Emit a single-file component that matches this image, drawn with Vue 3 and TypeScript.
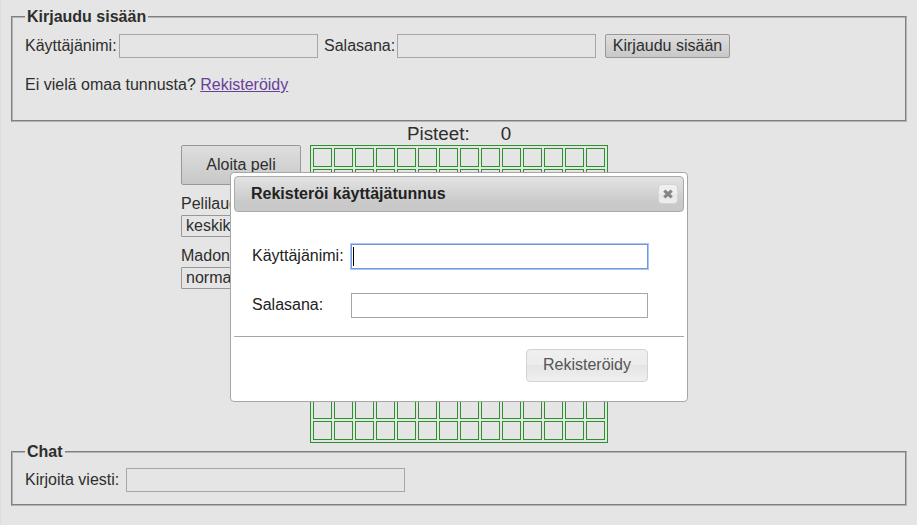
<script setup lang="ts">
import { ref } from 'vue'

const columns = 14
const cells = columns * columns
const score = ref(0)
const username = ref('')
const password = ref('')
const message = ref('')
const newUsername = ref('')
const newPassword = ref('')
</script>

<template>
  <div class="page">
    <fieldset class="panel login">
      <legend>Kirjaudu sisään</legend>
      <div class="login-row">
        <label class="user-label">Käyttäjänimi:</label>
        <input v-model="username" class="field" type="text" />
        <label class="pass-label">Salasana:</label>
        <input v-model="password" class="field" type="password" />
        <button class="login-button" type="button">Kirjaudu sisään</button>
      </div>
      <p class="register-line">Ei vielä omaa tunnusta? <a href="#">Rekisteröidy</a></p>
    </fieldset>

    <main class="game">
      <div class="score"><span>Pisteet:</span><span>{{ score }}</span></div>
      <div class="game-row">
        <aside class="settings">
          <button class="start" type="button">Aloita peli</button>
          <div class="setting">
            <label>Pelilaudan koko:</label>
            <div class="select">keskikokoinen</div>
          </div>
          <div class="setting">
            <label>Madon nopeus:</label>
            <div class="select">normaali</div>
          </div>
        </aside>
        <div class="board">
          <i v-for="n in cells" :key="n" class="cell"></i>
        </div>
      </div>
    </main>

    <fieldset class="panel chat">
      <legend>Chat</legend>
      <div class="chat-row">
        <label class="chat-label">Kirjoita viesti:</label>
        <input v-model="message" class="field chat-field" type="text" />
      </div>
    </fieldset>

    <section class="dialog" role="dialog">
      <header class="titlebar">
        <span class="title">Rekisteröi käyttäjätunnus</span>
        <button class="close" type="button">
          <svg width="10" height="10" viewBox="0 0 10 10">
            <path d="M1.3 1.6 8.7 8.4M8.7 1.6 1.3 8.4" stroke="#858585" stroke-width="3.2" fill="none" />
          </svg>
        </button>
      </header>
      <div class="dialog-body">
        <div class="form-row">
          <label>Käyttäjänimi:</label>
          <div class="input-wrap">
            <input v-model="newUsername" class="dialog-input active" type="text" />
            <span class="caret"></span>
          </div>
        </div>
        <div class="form-row">
          <label>Salasana:</label>
          <div class="input-wrap">
            <input v-model="newPassword" class="dialog-input" type="password" />
          </div>
        </div>
      </div>
      <footer class="dialog-footer">
        <button class="register" type="button">Rekisteröidy</button>
      </footer>
    </section>
  </div>
</template>

<style>
body {
  background: #e5e5e5;
  overflow: hidden;
}
</style>

<style scoped>
* {
  box-sizing: border-box;
}
.page {
  position: relative;
  width: 917px;
  height: 525px;
  padding: 8px 10px 0 10px;
  border-left: 1px solid #dcdcdc;
  background: #e5e5e5;
  color: #2e2e2e;
  font: 16px/18px "Liberation Sans", Arial, sans-serif;
}
button,
input {
  font: inherit;
  color: inherit;
  margin: 0;
  border-radius: 0;
  outline: none;
}
.panel {
  display: block;
  width: 896px;
  margin: 0;
  padding: 0 13px;
  border: 1px solid;
  border-color: #808080 #b4b4b4 #b4b4b4 #808080;
  box-shadow: inset -1px -1px #808080, inset 1px 1px #b4b4b4;
}
.login {
  height: 114px;
}
.chat {
  height: 63px;
}
legend {
  height: 17px;
  padding: 0 2px;
  background: #e5e5e5;
  font-weight: bold;
}
.login-row,
.chat-row {
  display: flex;
  align-items: center;
  height: 24px;
}
.login-row {
  margin-top: 9px;
}
.chat-row {
  margin-top: 8px;
}
.user-label {
  width: 94px;
}
.pass-label {
  width: 73px;
  margin-left: 6px;
}
.chat-label {
  width: 101px;
}
.login-row label,
.chat-row label {
  flex: none;
  white-space: nowrap;
}
.field {
  width: 199px;
  height: 24px;
  padding: 0 2px;
  border: 1px solid #a6a6a6;
  background: #e5e5e5;
}
.chat-field {
  width: 279px;
}
.login-button {
  width: 125px;
  height: 24px;
  margin-left: 9px;
  padding: 0;
  border: 1px solid #989898;
  border-radius: 2px;
  background: linear-gradient(#dedede, #c8c8c8);
  white-space: nowrap;
}
.register-line {
  margin: 18px 0 0;
}
.register-line a {
  color: #68409a;
  text-decoration: underline;
}
.game {
  height: 321px;
}
.score {
  display: flex;
  height: 23px;
  padding: 1px 0 0 396px;
  gap: 31px;
  font-size: 18.8px;
  line-height: 22px;
}
.game-row {
  display: flex;
  gap: 9px;
  padding-left: 170px;
}
.settings {
  width: 120px;
}
.start {
  display: block;
  width: 120px;
  height: 40px;
  padding: 0;
  border: 1px solid #989898;
  border-radius: 2px;
  background: linear-gradient(#dedede, #c8c8c8);
}
.setting {
  height: 52px;
  padding-top: 10px;
}
.setting label {
  display: block;
  height: 20px;
  white-space: nowrap;
}
.select {
  height: 22px;
  padding: 1px 4px;
  border: 1px solid #989898;
  border-radius: 1px;
}
.board {
  display: grid;
  grid-template-columns: repeat(14, 19px);
  grid-auto-rows: 19px;
  gap: 2px;
  width: 298px;
  height: 298px;
  padding: 2px;
  border: 1px solid #2c902c;
}
.cell {
  border: 1px solid #2c902c;
}
.dialog {
  position: absolute;
  left: 229px;
  top: 172px;
  width: 458px;
  height: 230px;
  padding: 3px;
  border: 1px solid #a6a6a6;
  border-radius: 4px;
  background: #fff;
  color: #222;
}
.titlebar {
  display: flex;
  align-items: center;
  justify-content: space-between;
  height: 36px;
  padding: 0 5px 0 16px;
  border: 1px solid #aaa;
  border-radius: 4px;
  background: linear-gradient(#e3e3e3, #c9c9c9 75%);
  font-weight: bold;
}
.close {
  display: flex;
  align-items: center;
  justify-content: center;
  width: 20px;
  height: 20px;
  padding: 0;
  border: 1px solid #d5d5d5;
  border-radius: 4px;
  background: linear-gradient(#efefef 50%, #e7e7e7 50%, #eee);
}
.dialog-body {
  display: flex;
  flex-direction: column;
  gap: 24px;
  height: 125px;
  padding: 32px 0 0 18px;
  border-bottom: 1px solid #a6a6a6;
}
.form-row {
  display: flex;
  height: 25px;
}
.form-row label {
  width: 99px;
  padding-top: 3px;
}
.input-wrap {
  position: relative;
  width: 297px;
  height: 25px;
}
.dialog-input {
  display: block;
  width: 100%;
  height: 25px;
  padding: 0 2px;
  border: 1px solid #a6a6a6;
  background: #fff;
}
.dialog-input.active {
  border-color: #7198d8;
  box-shadow: 0 0 0 1px #a9c7f5;
}
.caret {
  position: absolute;
  left: 2px;
  top: 3px;
  width: 1px;
  height: 19px;
  background: #000;
}
.dialog-footer {
  display: flex;
  justify-content: flex-end;
  padding: 12px 36px 0 0;
}
.register {
  width: 122px;
  height: 33px;
  padding: 0 0 2px;
  border: 1px solid #d3d3d3;
  border-radius: 4px;
  background: linear-gradient(#efefef, #ececec 49%, #e5e5e5 50%, #efefef);
  color: #555;
}
</style>
